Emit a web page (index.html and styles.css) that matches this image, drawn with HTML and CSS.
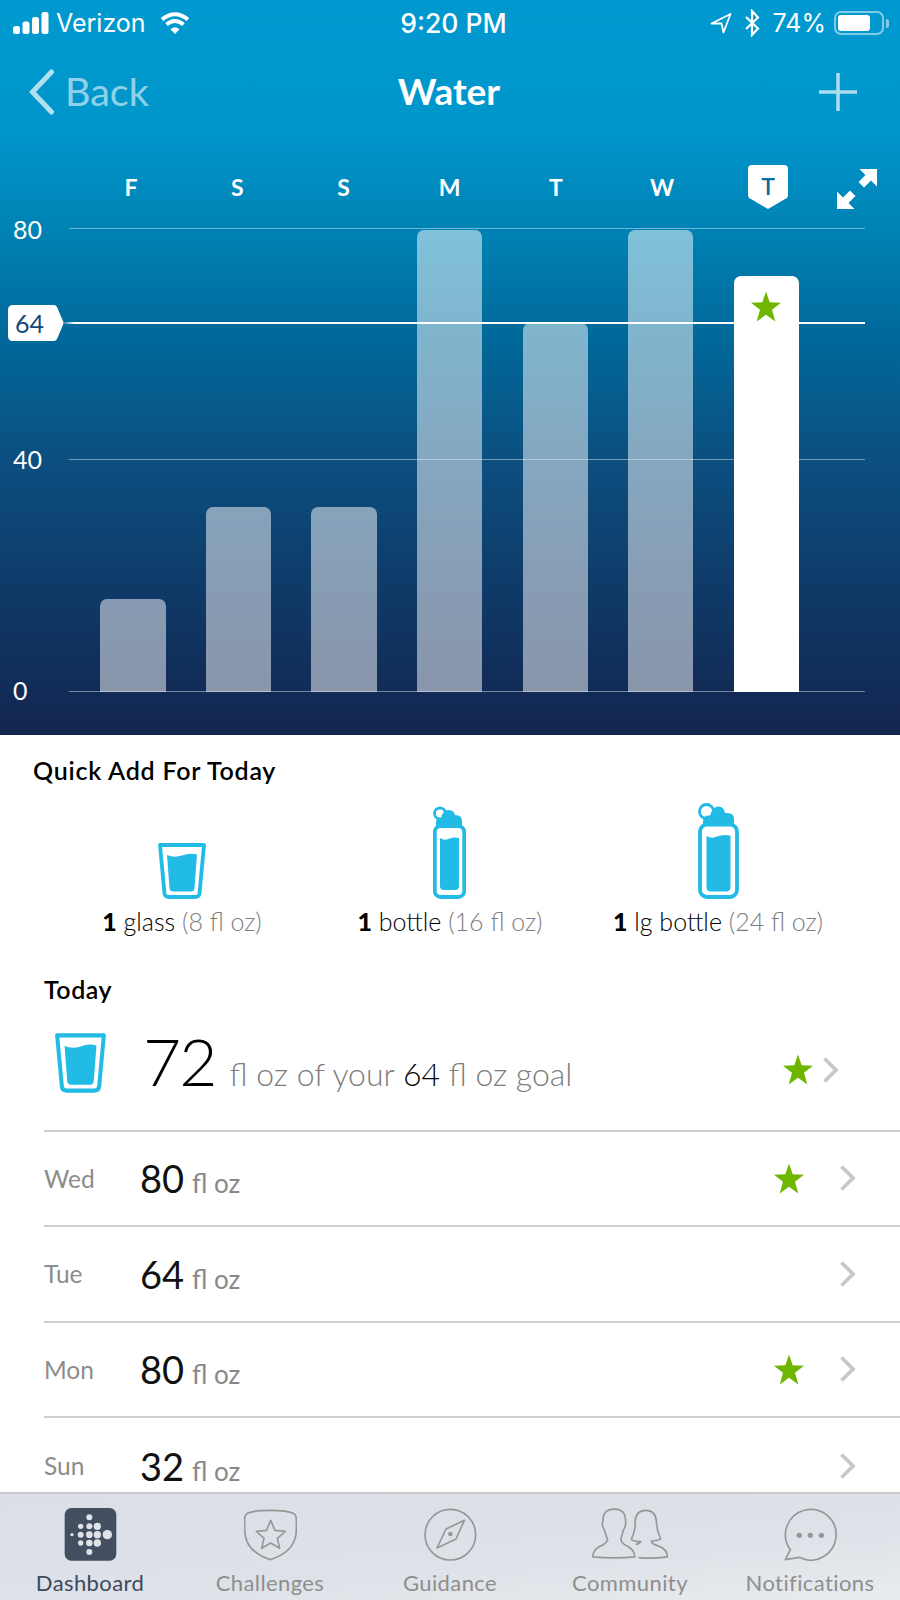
FILE: index.html
```html
<!DOCTYPE html>
<html lang="en">
<head>
<meta charset="utf-8">
<title>Water</title>
<link rel="stylesheet" href="styles.css">
</head>
<body>
<svg class="sprite" aria-hidden="true">
  <symbol id="star" viewBox="0 0 30 30"><polygon points="15,0 18.7,10.8 30,11.2 21,18.2 24.3,30 15,23.2 5.7,30 9,18.2 0,11.2 11.3,10.8"/></symbol>
  <symbol id="chev" viewBox="0 0 17 28"><polyline points="2.5,2.5 14,14 2.5,25.5"/></symbol>
  <symbol id="glass" viewBox="0 0 48 56"><path class="outline" d="M2 2H46L41.500 50.500Q41 54 37 54H11Q7 54 6.500 50.500Z"/><path class="water" d="M9 12Q16 15 24 12.500Q31 9.500 39 11.500L36.500 45Q36 48.500 33 48.500H15Q12 48.500 11.500 45Z"/></symbol>
</svg>
<div class="phone">
  <header class="hero">
    <div class="status">
      <div class="status-left">
        <svg class="signal" viewBox="0 0 36 22"><rect x="0" y="14" width="7" height="8" rx="2.500"/><rect x="9.500" y="9.500" width="7" height="12.500" rx="2.500"/><rect x="19" y="5" width="7" height="17" rx="2.500"/><rect x="28.500" y="0" width="7" height="22" rx="2.500"/></svg>
        <span>Verizon</span>
        <svg class="wifi" viewBox="0 0 30 22"><path d="M15 22L10.500 17.200Q15 13.500 19.500 17.200Z"/><path class="arc" d="M6.500 12.500Q15 5.500 23.500 12.500"/><path class="arc" d="M2 7.500Q15 -3 28 7.500"/></svg>
      </div>
      <div class="status-time">9:20 PM</div>
      <div class="status-right">
        <svg class="loc" viewBox="0 0 22 22"><path d="M1.500 11.500L20.500 2L13.500 20.500L11.500 11.500Z"/></svg>
        <svg class="bt" viewBox="0 0 16 28"><path d="M2 8L14 19.500L8 26V2L14 8.500L2 20"/></svg>
        <span>74%</span>
        <div class="battery"><div class="battery-fill"></div></div>
        <div class="battery-cap"></div>
      </div>
    </div>
    <nav class="nav">
      <div class="back">
        <svg class="back-chev" viewBox="0 0 26 46"><polyline points="22.500,3 3.500,23 22.500,43"/></svg>
        <span>Back</span>
      </div>
      <div class="nav-title">Water</div>
      <svg class="plus" viewBox="0 0 38 38"><path d="M19 0V38M0 19H38"/></svg>
    </nav>
    <div class="days">
      <span class="day">F</span><span class="day">S</span><span class="day">S</span><span class="day">M</span><span class="day">T</span><span class="day">W</span>
      <span class="day day-today">
        <svg class="badge" viewBox="0 0 40 44"><path d="M4 0H36Q40 0 40 4V30Q40 33 37 34L21 43.500Q20 44 19 43.500L3 34Q0 33 0 30V4Q0 0 4 0Z"/></svg>
        <b>T</b>
      </span>
      <svg class="expand" viewBox="0 0 40 40"><path d="M40 0V17.500L34 11.500L27 18.500L21.500 13L28.500 6L22.500 0Z"/><path d="M0 40V22.500L6 28.500L13 21.500L18.500 27L11.500 34L17.500 40Z"/></svg>
    </div>
    <div class="plot">
      <div class="bars">
        <div class="bar" style="height:93px"></div>
        <div class="bar" style="height:185px"></div>
        <div class="bar" style="height:185px"></div>
        <div class="bar" style="height:462px"></div>
        <div class="bar" style="height:369px"></div>
        <div class="bar" style="height:462px"></div>
        <div class="bar bar-now" style="height:416px"><svg class="bar-star"><use href="#star"/></svg></div>
      </div>
      <div class="grid-line gl-80"></div>
      <div class="grid-line gl-40"></div>
      <div class="grid-line gl-0"></div>
      <div class="goal-line"></div>
      <span class="y-label yl-80">80</span>
      <span class="y-label yl-40">40</span>
      <span class="y-label yl-0">0</span>
      <div class="goal-tag">64</div>
    </div>
  </header>

  <main class="content">
    <h2 class="quick-title">Quick Add For Today</h2>
    <div class="quick">
      <div class="quick-item">
        <svg class="q-glass"><use href="#glass"/></svg>
        <div class="quick-label"><b>1</b> glass <span>(8 fl oz)</span></div>
      </div>
      <div class="quick-item">
        <svg class="q-bottle" viewBox="0 0 33 93">
          <circle class="loop" cx="7" cy="7.500" r="5.500"/>
          <path class="water" d="M3 22V16Q3 12 8 12Q10 4 15 4Q21 4 22 9Q29 9 29 15V22Z"/>
          <rect class="outline" x="1.800" y="20" width="29.400" height="71" rx="6"/>
          <path class="water" d="M7 32Q12 35 17 32.500Q21 31 26 32V80Q26 84 22 84H11Q7 84 7 80Z"/>
        </svg>
        <div class="quick-label"><b>1</b> bottle <span>(16 fl oz)</span></div>
      </div>
      <div class="quick-item">
        <svg class="q-large" viewBox="0 0 41 97">
          <circle class="loop" cx="8.500" cy="9.500" r="7"/>
          <path class="water" d="M5 24V19Q5 13 12 13.500Q15 4.500 20.500 4.500Q26 4.500 27 11Q36 10 36 17V24Z"/>
          <rect class="outline" x="2" y="22.500" width="37" height="72.500" rx="7"/>
          <path class="water" d="M8.500 34Q14 37 19 34.500Q25 32 32.500 33.500V85Q32.500 89.500 28 89.500H13Q8.500 89.500 8.500 85Z"/>
        </svg>
        <div class="quick-label"><b>1</b> lg bottle <span>(24 fl oz)</span></div>
      </div>
    </div>

    <h3 class="today-title">Today</h3>
    <div class="today">
      <svg class="t-glass"><use href="#glass"/></svg>
      <div class="today-val"><span class="today-num">72</span> <span class="today-unit">fl oz of your <em>64</em> fl oz goal</span></div>
      <svg class="star t-star"><use href="#star"/></svg>
      <svg class="chev t-chev"><use href="#chev"/></svg>
    </div>
    <div class="row">
      <span class="row-day">Wed</span>
      <div class="row-val"><span class="row-num">80</span> <span class="row-unit">fl oz</span></div>
      <svg class="star"><use href="#star"/></svg>
      <svg class="chev"><use href="#chev"/></svg>
    </div>
    <div class="row">
      <span class="row-day">Tue</span>
      <div class="row-val"><span class="row-num">64</span> <span class="row-unit">fl oz</span></div>
      <svg class="chev"><use href="#chev"/></svg>
    </div>
    <div class="row">
      <span class="row-day">Mon</span>
      <div class="row-val"><span class="row-num">80</span> <span class="row-unit">fl oz</span></div>
      <svg class="star"><use href="#star"/></svg>
      <svg class="chev"><use href="#chev"/></svg>
    </div>
    <div class="row">
      <span class="row-day">Sun</span>
      <div class="row-val"><span class="row-num">32</span> <span class="row-unit">fl oz</span></div>
      <svg class="chev"><use href="#chev"/></svg>
    </div>
  </main>

  <footer class="tabs">
    <div class="tab tab-active">
      <svg class="tab-icon" viewBox="188 85 159 159">
        <rect class="logo-bg" x="190" y="85" width="155" height="158" rx="20"/>
        <g class="logo-dots">
          <circle cx="264" cy="113" r="9"/>
          <circle cx="238" cy="140" r="8"/><circle cx="264" cy="140" r="9"/><circle cx="288" cy="140" r="11"/>
          <circle cx="212" cy="165" r="5"/><circle cx="238" cy="165" r="9"/><circle cx="264" cy="165" r="10"/><circle cx="288" cy="165" r="11"/><circle cx="318" cy="165" r="14"/>
          <circle cx="238" cy="190" r="8"/><circle cx="264" cy="190" r="10"/><circle cx="288" cy="190" r="11"/>
          <circle cx="264" cy="217" r="9"/>
        </g>
      </svg>
      <span>Dashboard</span>
    </div>
    <div class="tab">
      <svg class="tab-icon line" viewBox="731 85 159 159">
        <path d="M810 92Q860 92 879 101Q888 106 888 118V150Q888 215 810 240Q733 215 733 150V118Q733 106 741 101Q760 92 810 92Z"/>
        <polygon points="811,122 824,152 855,155 831,176 838,206 811,190 784,206 791,176 768,155 798,152"/>
      </svg>
      <span>Challenges</span>
    </div>
    <div class="tab">
      <svg class="tab-icon line" viewBox="1269 85 159 159">
        <circle cx="1348" cy="165" r="76"/>
        <path d="M1390 122L1365 178L1308 205L1335 148Z"/>
        <circle class="dot" cx="1348" cy="163" r="7"/>
      </svg>
      <span>Guidance</span>
    </div>
    <div class="tab">
      <svg class="tab-icon tab-icon-wide line" viewBox="420 85 235 159">
        <path d="M490 88Q525 88 524 125Q526 140 518 150Q512 170 510 180Q512 192 530 200Q552 212 552 232Q490 238 425 232Q425 212 447 200Q466 192 470 180Q466 170 460 150Q450 135 456 125Q455 88 490 88Z"/>
        <path d="M541 180Q555 150 553 125Q555 92 585 92Q615 92 617 125Q617 150 630 178Q615 185 603 184Q600 192 620 198Q650 208 650 232Q605 238 563 234M541 180Q555 187 570 186Q565 192 555 195"/>
      </svg>
      <span>Community</span>
    </div>
    <div class="tab">
      <svg class="tab-icon line" viewBox="999 85 159 159">
        <path d="M1018 210A76 76 0 1 1 1045 233L1003 240Z"/>
        <circle class="dot" cx="1045" cy="167" r="8"/><circle class="dot" cx="1078" cy="167" r="8"/><circle class="dot" cx="1111" cy="167" r="8"/>
      </svg>
      <span>Notifications</span>
    </div>
  </footer>
</div>
</body>
</html>
```
FILE: styles.css
```css
* { box-sizing: border-box; }
html, body { margin: 0; padding: 0; }
body { font-family: "Lato", "Liberation Sans", sans-serif; background: #fff; }
.sprite { display: none; }
.phone { width: 900px; height: 1600px; display: flex; flex-direction: column; overflow: hidden; }

/* hero */
.hero {
  height: 735px; flex: none; color: #fff;
  background: linear-gradient(180deg, #0099cf 0, #0096cb 130px, #0080b2 240px, #006a9b 330px, #0b4f80 460px, #0f3a68 590px, #13254f 735px);
}
.status { height: 46px; display: grid; grid-template-columns: 1fr auto 1fr; align-items: center; padding: 0 11px 0 13px; font-family: "Inter", "Roboto", sans-serif; font-size: 25px; }
.status-left, .status-right { display: flex; align-items: center; }
.status-right { justify-content: flex-end; }
.status-left span { margin-left: 7px; }
.status-time { font-weight: 500; font-size: 26.500px; margin-left: 5px; }
.signal { width: 36px; height: 22px; fill: #fff; }
.wifi { width: 30px; height: 22px; margin-left: 14px; fill: #fff; }
.wifi .arc { fill: none; stroke: #fff; stroke-width: 4; }
.loc { width: 22px; height: 22px; fill: none; stroke: #fff; stroke-width: 1.800; stroke-linejoin: round; }
.bt { width: 16px; height: 28px; margin-left: 12px; fill: none; stroke: #fff; stroke-width: 2.200; }
.status-right span { margin-left: 13px; }
.battery { width: 50px; height: 24px; margin-left: 8px; border: 2px solid rgba(255,255,255,.5); border-radius: 7px; padding: 2px; }
.battery-fill { width: 32px; height: 100%; background: #fff; border-radius: 3px; }
.battery-cap { width: 3px; height: 9px; background: rgba(255,255,255,.5); border-radius: 0 2px 2px 0; margin-left: 2px; }

.nav { height: 92px; display: grid; grid-template-columns: 1fr auto 1fr; align-items: center; padding: 0 43px 0 29px; }
.back { display: flex; align-items: center; color: rgba(255,255,255,.58); font-size: 39.500px; font-weight: 400; }
.back span { margin: 0 0 4px 10px; }
.back-chev { width: 26px; height: 46px; fill: none; stroke: rgba(255,255,255,.7); stroke-width: 5; stroke-linecap: round; }
.nav-title { font-size: 37px; font-weight: 700; margin: 0 0 4px 12px; }
.plus { width: 38px; height: 38px; fill: none; stroke: rgba(255,255,255,.68); stroke-width: 3.500; justify-self: end; }

.days { height: 44px; margin: 27px 0 19px; display: grid; grid-template-columns: repeat(7, 106.200px) 40px; padding-left: 78px; align-items: center; }
.day { font-size: 23px; font-weight: 700; text-align: center; }
.day-today { position: relative; height: 44px; display: flex; align-items: center; justify-content: center; color: #0a6c9f; }
.day-today b { position: relative; font-weight: 600; margin-top: -2px; }
.badge { position: absolute; left: 32.800px; top: 0; width: 40px; height: 44px; fill: #fff; }
.expand { width: 40px; height: 40px; fill: #fff; margin: 4px 0 0 15.600px; }

.plot { position: relative; height: 464px; }
.bars { position: absolute; left: 100.200px; bottom: 0; height: 462px; display: grid; grid-template-columns: repeat(7, 65.400px); column-gap: 40.200px; align-items: end; }
.bar { background: rgba(255,255,255,.5); border-radius: 7px 7px 0 0; display: flex; justify-content: center; }
.bar-now { background: #fff; position: relative; z-index: 2; }
.bar-star { width: 30px; height: 31px; margin-top: 15px; fill: #6eb600; }
.grid-line { position: absolute; left: 69px; right: 35px; height: 1px; background: rgba(255,255,255,.42); }
.gl-80 { top: 0; }
.gl-40 { top: 231px; }
.gl-0 { top: 463px; }
.goal-line { position: absolute; left: 62px; right: 35px; top: 94px; height: 2px; background: linear-gradient(90deg, rgba(255,255,255,0), #fff 12px); }
.y-label { position: absolute; left: 13px; font-size: 25px; line-height: 28px; }
.yl-80 { top: -13px; }
.yl-40 { top: 217px; }
.yl-0 { top: 448px; }
.goal-tag {
  position: absolute; left: 8px; top: 77px; width: 56px; height: 36px; padding-left: 7px;
  background: #fff; color: #14477a; font-size: 25px; line-height: 36px;
  clip-path: path("M5 0H46Q48 0 49 2L55 16Q56 18 55 20L49 34Q48 36 46 36H5Q0 36 0 31V5Q0 0 5 0Z");
}

/* content */
.content { flex: 1; min-height: 0; overflow: hidden; background: #fff; color: #000; }
.quick-title { margin: 20px 0 16px 33px; font-size: 25px; line-height: 30px; font-weight: 600; letter-spacing: .75px; }
.quick { display: grid; grid-template-columns: repeat(3, 268px); padding-left: 48px; }
.quick-item { display: flex; flex-direction: column; align-items: center; justify-content: flex-end; height: 135px; }
.quick-label { margin-top: 7px; font-size: 25px; line-height: 30px; font-weight: 300; white-space: nowrap; }
.quick-label b { font-weight: 900; }
.quick-label span { color: #7d7d7d; }
.outline { fill: none; stroke: #22bbe6; stroke-width: 3.800; stroke-linejoin: round; }
.water { fill: #22bbe6; }
.loop { fill: none; stroke: #22bbe6; stroke-width: 2.800; }
.q-glass { width: 48px; height: 56px; }
.q-bottle { width: 33px; height: 93px; margin-left: -2px; }
.q-large { width: 41px; height: 97px; }

.today-title { margin: 39px 0 0 44px; font-size: 25px; line-height: 28px; font-weight: 600; letter-spacing: .5px; }
.today { height: 128.500px; margin-left: 44px; padding: 0 61px 0 11px; display: flex; align-items: center; border-bottom: 2px solid #cfcfcf; }
.t-glass { width: 51px; height: 60px; flex: none; margin-top: -7px; }
.today-val { flex: 1; margin-left: 37px; font-weight: 300; margin-top: -11px; display: flex; align-items: baseline; }
.today-num { font-size: 66px; line-height: 80px; letter-spacing: -2px; }
.today-unit { font-size: 32px; color: #7d7d7d; margin-left: 14px; }
.today-unit em { font-style: normal; color: #000; font-weight: 300; }
.t-star { margin: 7px 9px 0 0; }
.t-chev { margin-top: 7px; }
.star { width: 30px; height: 31px; flex: none; fill: #6eb600; }
.chev { width: 17px; height: 28px; flex: none; fill: none; stroke: #c8c8c8; stroke-width: 3.800; }

.row { height: 95.500px; margin-left: 44px; padding-right: 44px; display: flex; align-items: center; border-bottom: 2px solid #cfcfcf; }
.row:last-child { border-bottom: 0; }
.row-day { width: 96px; font-size: 24.500px; font-weight: 400; color: #8c8c8c; }
.row-val { flex: 1; display: flex; align-items: baseline; font-weight: 400; }
.row-num { font-size: 38px; line-height: 44px; color: #111; }
.row-unit { font-size: 26px; color: #888; margin-left: 8px; font-weight: 400; }
.row .star { margin-right: 35px; }

/* tabs */
.tabs { height: 108px; flex: none; border-top: 2px solid #c9c9c9; background: linear-gradient(175deg, #dadee6 0, #dee2e8 60%, #e8ebef 100%); display: grid; grid-template-columns: repeat(5, 180px); color: #8e8e8e; }
.tab { display: flex; flex-direction: column; align-items: center; padding-top: 14px; font-size: 22px; line-height: 30px; }
.tab span { margin-top: 7px; letter-spacing: .4px; }
.tab-active { color: #3c4a5c; }
.tab-icon { width: 53px; height: 53px; display: block; }
.tab-icon-wide { width: 78px; }
.logo-bg { fill: #434f60; }
.logo-dots { fill: #dfe3e8; }
.line path, .line polygon, .line circle { fill: none; stroke: #979797; stroke-width: 5; stroke-linejoin: round; }
.line .dot { fill: #979797; stroke: none; }
```
